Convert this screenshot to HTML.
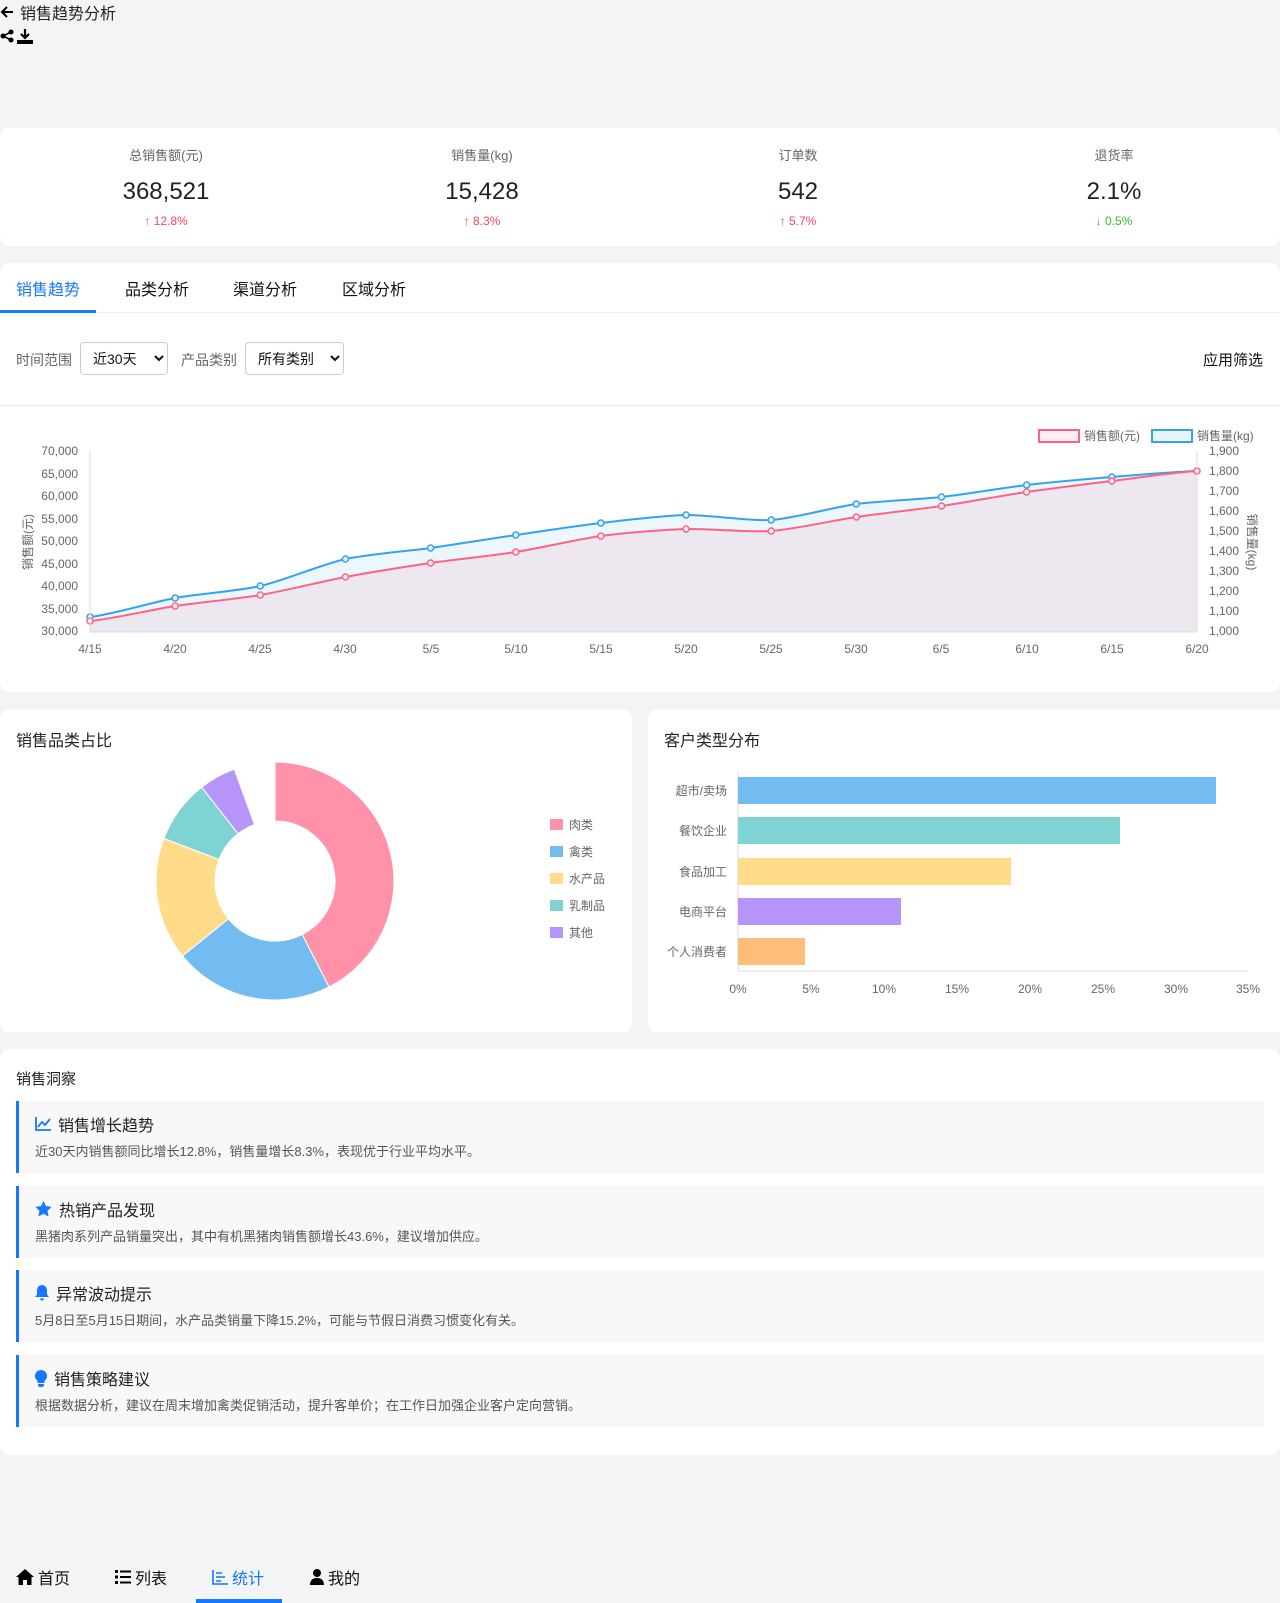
<!DOCTYPE html>
<html><head><meta charset="utf-8"><style>
*{margin:0;padding:0;box-sizing:border-box}
body{width:1280px;height:1603px;background:#f3f4f6;font-family:"Liberation Sans","Noto Sans CJK SC",sans-serif;position:relative;overflow:hidden;color:#222}
.a{position:absolute}
.card{position:absolute;background:#fff;border-radius:10px}
.lbl{font-size:13px;color:#666;text-align:center;width:316px}
.val{font-size:24px;color:#222;text-align:center;width:316px}
.chg{font-size:12px;text-align:center;width:316px}
.tab{position:absolute;top:276px;font-size:16px;color:#111}
select{position:absolute;height:33px;border:1px solid #ccc;border-radius:4px;background:#fff;font-size:14px;padding:0 8px;font-family:inherit;color:#111}
.item{position:absolute;left:16px;width:1248px;height:72px;background:#f8f8f8;border-left:3px solid #1677ff}
.item .t{position:absolute;left:16px;top:11px;font-size:16px;color:#222;display:flex;align-items:center;gap:7px}
.item .d{position:absolute;left:16px;top:40px;font-size:13px;color:#555}
.nav{position:absolute;top:1565px;font-size:16px;display:flex;align-items:center;gap:4px;color:#111}
</style></head><body>
<div class="a" style="left:0;top:0px;font-size:16px;display:flex;align-items:center;gap:6px">
<svg width="14" height="14" viewBox="0 0 14 14"><path d="M13 7H2M7 2L2 7l5 5" stroke="#000" stroke-width="2" fill="none"/></svg>销售趋势分析</div>
<div class="a" style="left:0;top:29px;display:flex;gap:3px">
<svg width="14" height="14" viewBox="0 0 14 14"><circle cx="11" cy="3" r="2.5"/><circle cx="3" cy="7" r="2.5"/><circle cx="11" cy="11" r="2.5"/><path d="M11 3L3 7l8 4" stroke="#000" stroke-width="1.6" fill="none"/></svg>
<svg width="16" height="15" viewBox="0 0 16 15"><path d="M8 0v8M4 5l4 4 4-4" stroke="#000" stroke-width="2.2" fill="none"/><rect x="0" y="11" width="16" height="4"/></svg></div>

<div class="card" style="left:0;top:128px;width:1280px;height:118px"></div>
<div class="a lbl" style="left:8px;top:145px">总销售额(元)</div><div class="a val" style="left:8px;top:178px">368,521</div><div class="a chg" style="left:8px;top:214px;color:#f5475b"><b>↑</b> 12.8%</div>
<div class="a lbl" style="left:324px;top:145px">销售量(kg)</div><div class="a val" style="left:324px;top:178px">15,428</div><div class="a chg" style="left:324px;top:214px;color:#f5475b"><b>↑</b> 8.3%</div>
<div class="a lbl" style="left:640px;top:145px">订单数</div><div class="a val" style="left:640px;top:178px">542</div><div class="a chg" style="left:640px;top:214px;color:#f5475b"><b>↑</b> 5.7%</div>
<div class="a lbl" style="left:956px;top:145px">退货率</div><div class="a val" style="left:956px;top:178px">2.1%</div><div class="a chg" style="left:956px;top:214px;color:#35b935"><b>↓</b> 0.5%</div>

<div class="card" style="left:0;top:263px;width:1280px;height:429px"></div>
<div class="a" style="left:0;top:312px;width:1280px;height:1px;background:#eee"></div>
<div class="a" style="left:0;top:310px;width:96px;height:3px;background:#1677ff"></div>
<div class="tab" style="left:16px;color:#1677ff">销售趋势</div>
<div class="tab" style="left:125px">品类分析</div>
<div class="tab" style="left:233px">渠道分析</div>
<div class="tab" style="left:342px">区域分析</div>
<div class="a" style="left:16px;top:350px;font-size:14px;color:#666">时间范围</div>
<select style="left:80px;top:342px;width:88px"><option>近30天</option></select>
<div class="a" style="left:181px;top:350px;font-size:14px;color:#666">产品类别</div>
<select style="left:245px;top:342px;width:99px"><option>所有类别</option></select>
<div class="a" style="right:17px;top:349px;font-size:15px;color:#111">应用筛选</div>
<div class="a" style="left:0;top:405px;width:1280px;height:1px;background:#eee"></div>

<svg class="a" style="left:0;top:0" width="1280" height="692" font-family="Liberation Sans,Noto Sans CJK SC,sans-serif" font-size="12" fill="#666">
<g id="ch"></g>
<line x1="90" y1="451" x2="90" y2="632" stroke="#ddd"/><line x1="1197" y1="451" x2="1197" y2="632" stroke="#ddd"/>
<line x1="90" y1="632" x2="1197" y2="632" stroke="#ddd"/>
<g text-anchor="end">
<text x="78" y="455">70,000</text><text x="78" y="478">65,000</text><text x="78" y="500">60,000</text><text x="78" y="523">55,000</text><text x="78" y="545">50,000</text><text x="78" y="568">45,000</text><text x="78" y="590">40,000</text><text x="78" y="613">35,000</text><text x="78" y="635">30,000</text></g>
<g><text x="1209" y="455">1,900</text><text x="1209" y="475">1,800</text><text x="1209" y="495">1,700</text><text x="1209" y="515">1,600</text><text x="1209" y="535">1,500</text><text x="1209" y="555">1,400</text><text x="1209" y="575">1,300</text><text x="1209" y="595">1,200</text><text x="1209" y="615">1,100</text><text x="1209" y="635">1,000</text></g>
<text transform="translate(32,542) rotate(-90)" text-anchor="middle">销售额(元)</text>
<text transform="translate(1248,542) rotate(90)" text-anchor="middle">销售量(kg)</text>
<g text-anchor="middle"><text x="90" y="653">4/15</text><text x="175" y="653">4/20</text><text x="260" y="653">4/25</text><text x="345" y="653">4/30</text><text x="431" y="653">5/5</text><text x="516" y="653">5/10</text><text x="601" y="653">5/15</text><text x="686" y="653">5/20</text><text x="771" y="653">5/25</text><text x="856" y="653">5/30</text><text x="941" y="653">6/5</text><text x="1027" y="653">6/10</text><text x="1112" y="653">6/15</text><text x="1197" y="653">6/20</text></g>
<rect x="1039" y="430" width="40" height="12" fill="#ffeef1" stroke="#ff6384" stroke-width="2"/><text x="1084" y="440">销售额(元)</text>
<rect x="1152" y="430" width="40" height="12" fill="#e8f4fc" stroke="#36a2eb" stroke-width="2"/><text x="1197" y="440">销售量(kg)</text>
</svg>

<div class="card" style="left:0;top:709px;width:632px;height:323px"></div>
<div class="a" style="left:16px;top:727px;font-size:16px">销售品类占比</div>
<svg class="a" style="left:0;top:709px" width="632" height="323" font-family="Liberation Sans,Noto Sans CJK SC,sans-serif" font-size="12" fill="#666">
<g id="pie" stroke="#fff" stroke-width="1"></g>
<rect x="550" y="110" width="13" height="11" fill="#ff91a8"/><text x="569" y="120">肉类</text>
<rect x="550" y="137" width="13" height="11" fill="#72bcf1"/><text x="569" y="147">禽类</text>
<rect x="550" y="164" width="13" height="11" fill="#ffdb8a"/><text x="569" y="174">水产品</text>
<rect x="550" y="191" width="13" height="11" fill="#80d3d3"/><text x="569" y="201">乳制品</text>
<rect x="550" y="218" width="13" height="11" fill="#b794fb"/><text x="569" y="228">其他</text>
</svg>

<div class="card" style="left:648px;top:709px;width:640px;height:323px"></div>
<div class="a" style="left:664px;top:727px;font-size:16px">客户类型分布</div>
<svg class="a" style="left:648px;top:709px" width="632" height="323" font-family="Liberation Sans,Noto Sans CJK SC,sans-serif" font-size="12" fill="#666">
<line x1="90" y1="62" x2="90" y2="262" stroke="#ddd"/><line x1="90" y1="262" x2="600" y2="262" stroke="#ddd"/>
<rect x="90" y="68" width="478" height="27" fill="#72bcf1"/>
<rect x="90" y="108" width="382" height="27" fill="#80d3d3"/>
<rect x="90" y="149" width="273" height="27" fill="#ffdb8a"/>
<rect x="90" y="189" width="163" height="27" fill="#b794fb"/>
<rect x="90" y="229" width="67" height="27" fill="#ffbd7a"/>
<g text-anchor="end"><text x="79" y="86">超市/卖场</text><text x="79" y="126">餐饮企业</text><text x="79" y="167">食品加工</text><text x="79" y="207">电商平台</text><text x="79" y="247">个人消费者</text></g>
<g text-anchor="middle"><text x="90" y="284">0%</text><text x="163" y="284">5%</text><text x="236" y="284">10%</text><text x="309" y="284">15%</text><text x="382" y="284">20%</text><text x="455" y="284">25%</text><text x="528" y="284">30%</text><text x="600" y="284">35%</text></g>
</svg>

<div class="card" style="left:0;top:1049px;width:1280px;height:406px"></div>
<div class="a" style="left:16px;top:1068px;font-size:15px">销售洞察</div>
<div class="item" style="top:1101px"><div class="t"><svg width="16" height="14" viewBox="0 0 16 14"><path d="M1 0v13h15M3 10l4-5 3 3 5-6" stroke="#1677ff" stroke-width="1.8" fill="none"/></svg>销售增长趋势</div><div class="d">近30天内销售额同比增长12.8%，销售量增长8.3%，表现优于行业平均水平。</div></div>
<div class="item" style="top:1186px"><div class="t"><svg width="17" height="16" viewBox="0 0 24 23"><path d="M12 0l3.6 7.4 8.1 1.1-5.9 5.7 1.5 8.1L12 18.4l-7.3 3.9 1.5-8.1L.3 8.5l8.1-1.1z" fill="#1677ff"/></svg>热销产品发现</div><div class="d">黑猪肉系列产品销量突出，其中有机黑猪肉销售额增长43.6%，建议增加供应。</div></div>
<div class="item" style="top:1270px"><div class="t"><svg width="14" height="16" viewBox="0 0 14 16"><path d="M7 0c-3 0-5 2.5-5 5.5v4L0 12h14l-2-2.5v-4C12 2.5 10 0 7 0zM5 13.5a2 2 0 004 0z" fill="#1677ff"/></svg>异常波动提示</div><div class="d">5月8日至5月15日期间，水产品类销量下降15.2%，可能与节假日消费习惯变化有关。</div></div>
<div class="item" style="top:1355px"><div class="t"><svg width="12" height="17" viewBox="0 0 12 17"><path d="M6 0a6 6 0 00-3.5 10.9V13h7v-2.1A6 6 0 006 0zM3 14h6v1.5L7.5 17h-3L3 15.5z" fill="#1677ff"/></svg>销售策略建议</div><div class="d">根据数据分析，建议在周末增加禽类促销活动，提升客单价；在工作日加强企业客户定向营销。</div></div>

<div class="nav" style="left:16px"><svg width="18" height="16" viewBox="0 0 18 16"><path d="M9 0L0 8h2.5v8h4.5v-5h4v5h4.5V8H18z"/></svg>首页</div>
<div class="nav" style="left:115px"><svg width="16" height="14" viewBox="0 0 16 14"><path d="M0 0h3v3H0zM0 5.5h3v3H0zM0 11h3v3H0zM5 .5h11v2H5zM5 6h11v2H5zM5 11.5h11v2H5z"/></svg>列表</div>
<div class="nav" style="left:212px;color:#1677ff"><svg width="16" height="15" viewBox="0 0 16 15"><path d="M1 0v14h15M4 3h6M4 7h9M4 11h5" stroke="#1677ff" stroke-width="1.6" fill="none"/></svg>统计</div>
<div class="nav" style="left:310px"><svg width="14" height="16" viewBox="0 0 14 16"><circle cx="7" cy="4" r="4"/><path d="M0 16c0-5 3-7 7-7s7 2 7 7z"/></svg>我的</div>
<div class="a" style="left:196px;top:1599px;width:86px;height:4px;background:#1677ff"></div>

<script>
var xs=[],p=[621,606,595,577,563,552,536,529,531,517,506,492,481,471],b=[617,598,586,559,548,535,523,515,520,504,497,485,477,471];
for(var i=0;i<14;i++)xs.push(90+i*85.15);
function path(a){var d='M'+xs[0]+' '+a[0],t=0.25;for(var i=1;i<14;i++){var y0=a[i-2]!==undefined?a[i-2]:a[i-1],y3=a[i+1]!==undefined?a[i+1]:a[i];
var c1x=xs[i-1]+85.15*t,c1y=a[i-1]+(a[i]-y0)*t/2,c2x=xs[i]-85.15*t,c2y=a[i]-(y3-a[i-1])*t/2;
d+=' C'+c1x+' '+c1y+' '+c2x+' '+c2y+' '+xs[i]+' '+a[i];}return d;}
var g=document.getElementById('ch'),h='';
h+='<path d="'+path(b)+' L1197 632 L90 632Z" fill="rgba(54,162,235,0.1)"/>';
h+='<path d="'+path(p)+' L1197 632 L90 632Z" fill="rgba(255,99,132,0.1)"/>';
h+='<path d="'+path(b)+'" stroke="#36a2eb" stroke-width="2" fill="none"/>';
h+='<path d="'+path(p)+'" stroke="#ff6384" stroke-width="2" fill="none"/>';
for(i=0;i<14;i++){h+='<circle cx="'+xs[i]+'" cy="'+b[i]+'" r="3" fill="#e8f4fc" stroke="#36a2eb" stroke-width="1.5"/>';}
for(i=0;i<14;i++){h+='<circle cx="'+xs[i]+'" cy="'+p[i]+'" r="3" fill="#ffeef1" stroke="#ff6384" stroke-width="1.5"/>';}
g.innerHTML=h;
var cx=275,cy=172,R=119,r=60,ang=[0,153,231,291,322,340],cols=['#ff91a8','#72bcf1','#ffdb8a','#80d3d3','#b794fb'],ph='';
function pt(a,rr){var t=(a-90)*Math.PI/180;return (cx+rr*Math.cos(t)).toFixed(1)+' '+(cy+rr*Math.sin(t)).toFixed(1);}
for(i=0;i<5;i++){var a0=ang[i],a1=ang[i+1],l=(a1-a0)>180?1:0;
ph+='<path fill="'+cols[i]+'" d="M'+pt(a0,R)+' A'+R+' '+R+' 0 '+l+' 1 '+pt(a1,R)+' L'+pt(a1,r)+' A'+r+' '+r+' 0 '+l+' 0 '+pt(a0,r)+'Z"/>';}
document.getElementById('pie').innerHTML=ph;
</script>
</body></html>
